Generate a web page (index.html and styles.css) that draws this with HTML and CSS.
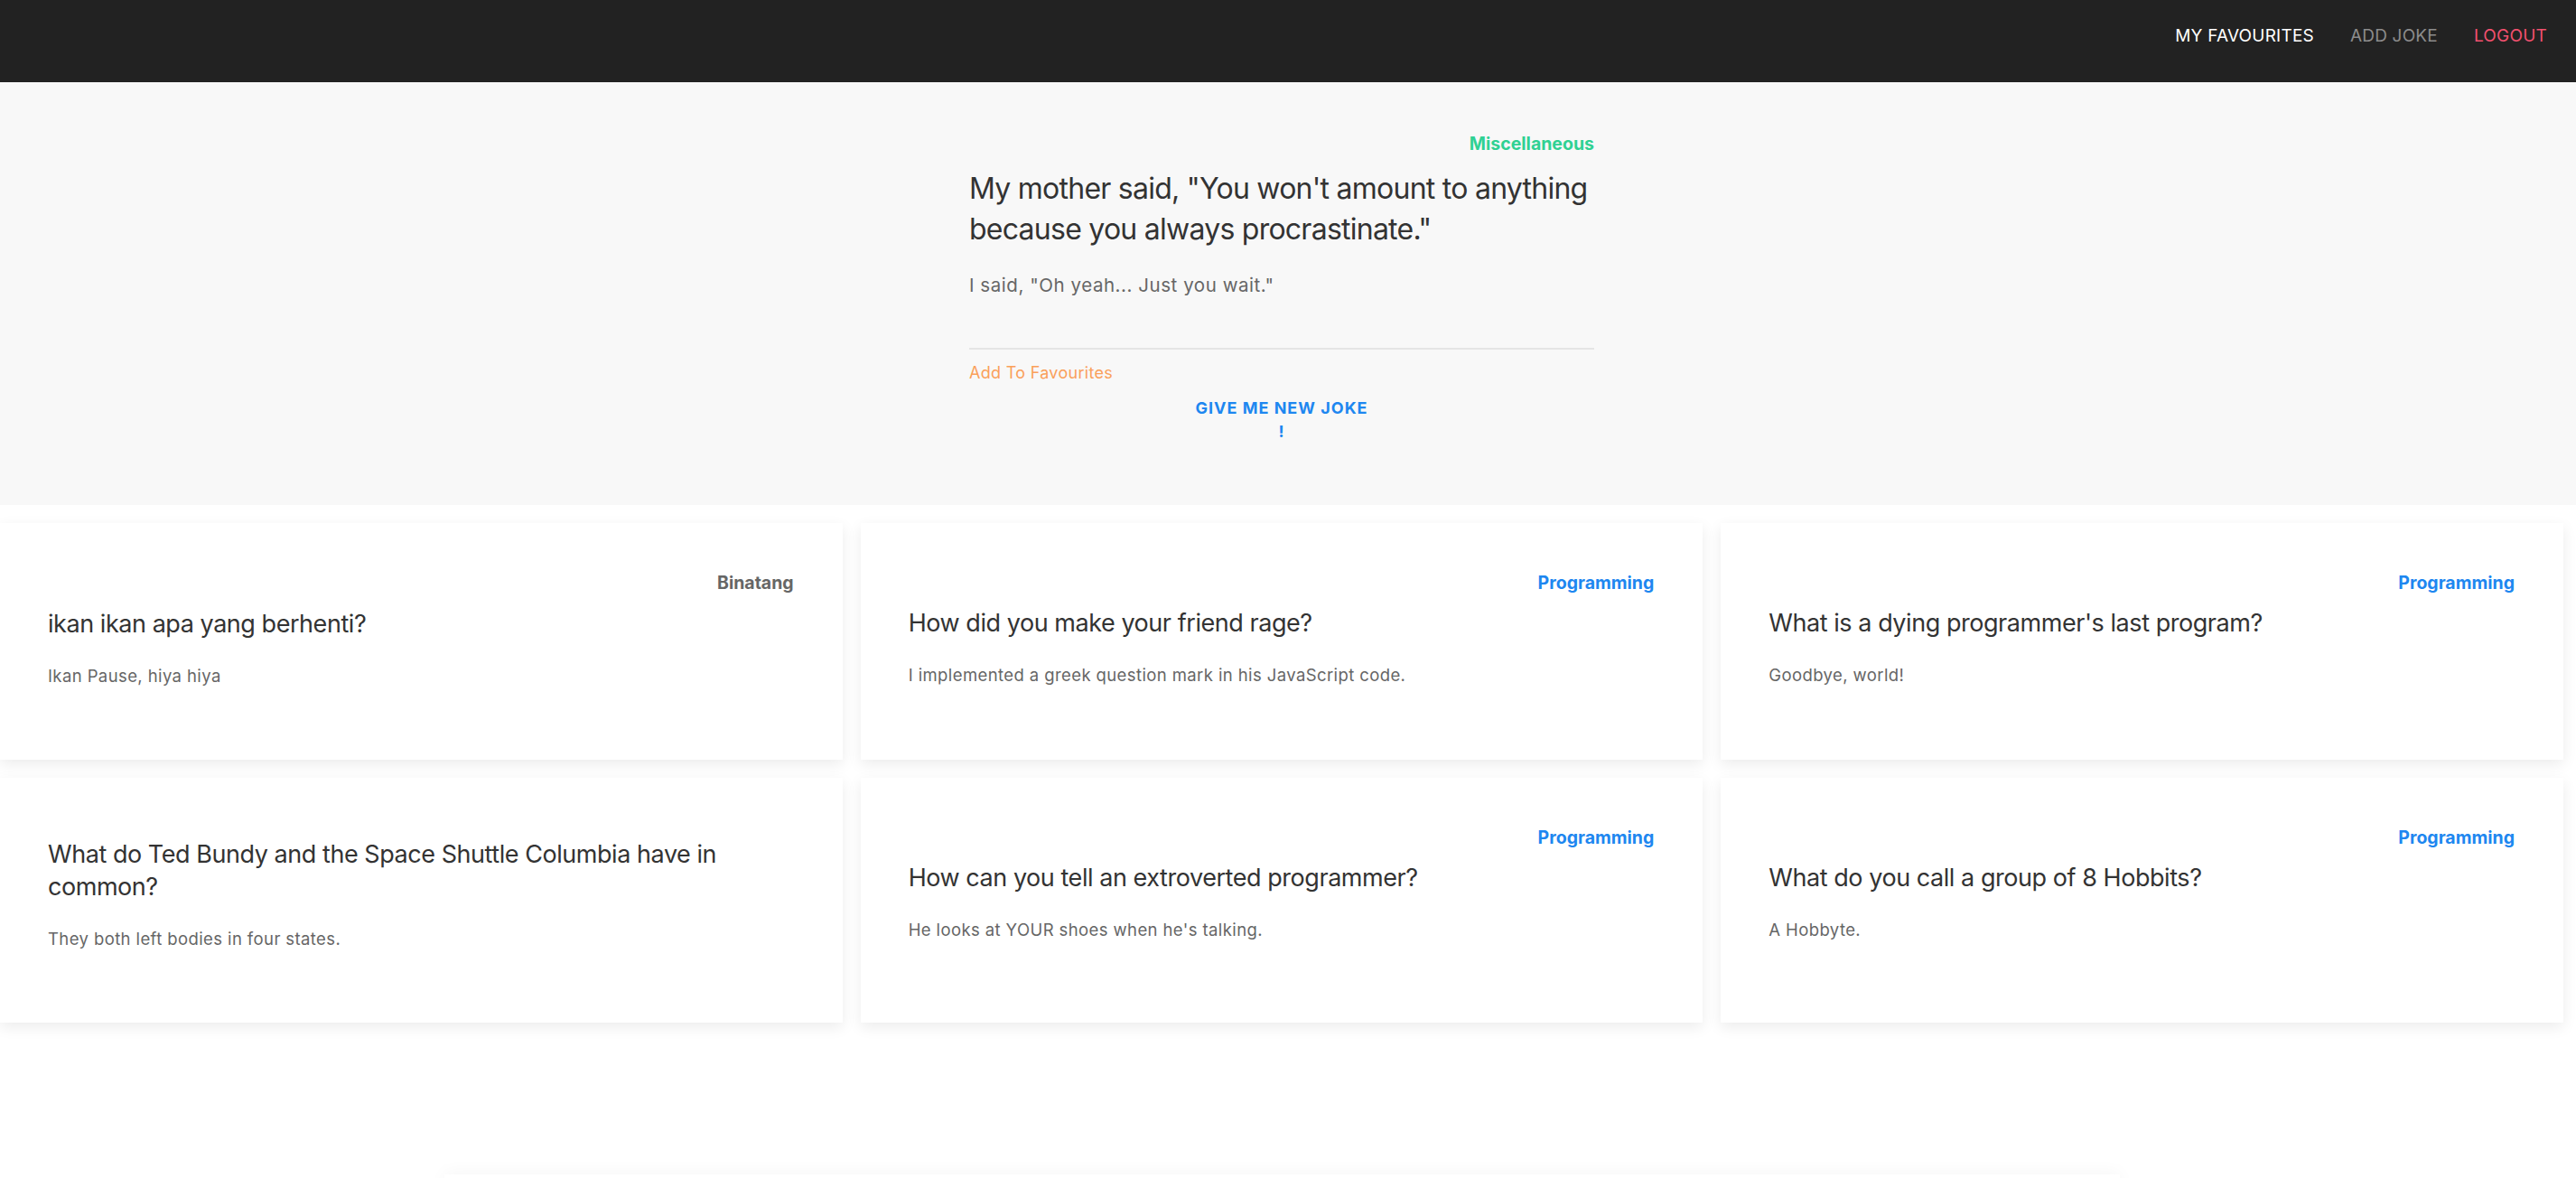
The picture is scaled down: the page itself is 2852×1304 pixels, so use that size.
FILE: index.html
```html
<!DOCTYPE html>
<html>
<head>
<meta charset="utf-8">
<link rel="stylesheet" href="styles.css">
</head>
<body>
<nav class="navbar">
  <a class="nav-link nav-active">MY FAVOURITES</a>
  <a class="nav-link nav-muted">ADD JOKE</a>
  <a class="nav-link nav-danger">LOGOUT</a>
</nav>
<section class="hero">
  <div class="hero-inner">
    <div class="tag tag-success">Miscellaneous</div>
    <h1 class="hero-title">My mother said, "You won't amount to anything because you always procrastinate."</h1>
    <p class="hero-sub">I said, "Oh yeah... Just you wait."</p>
    <div class="hero-footer">
      <a class="fav-link">Add To Favourites</a>
    </div>
    <div class="btn-row">
      <button class="btn-text">GIVE ME NEW JOKE !</button>
    </div>
  </div>
</section>
<main class="cards">
  <article class="card">
    <div class="tag tag-default">Binatang</div>
    <h3 class="card-title">ikan ikan apa yang berhenti?</h3>
    <p class="card-body">Ikan Pause, hiya hiya</p>
  </article>
  <article class="card">
    <div class="tag tag-primary">Programming</div>
    <h3 class="card-title">How did you make your friend rage?</h3>
    <p class="card-body">I implemented a greek question mark in his JavaScript code.</p>
  </article>
  <article class="card">
    <div class="tag tag-primary">Programming</div>
    <h3 class="card-title">What is a dying programmer's last program?</h3>
    <p class="card-body">Goodbye, world!</p>
  </article>
  <article class="card">
    <div class="tag tag-default"></div>
    <h3 class="card-title">What do Ted Bundy and the Space Shuttle Columbia have in common?</h3>
    <p class="card-body">They both left bodies in four states.</p>
  </article>
  <article class="card">
    <div class="tag tag-primary">Programming</div>
    <h3 class="card-title">How can you tell an extroverted programmer?</h3>
    <p class="card-body">He looks at YOUR shoes when he's talking.</p>
  </article>
  <article class="card">
    <div class="tag tag-primary">Programming</div>
    <h3 class="card-title">What do you call a group of 8 Hobbits?</h3>
    <p class="card-body">A Hobbyte.</p>
  </article>
</main>
<div class="footer-box"></div>
</body>
</html>
```
FILE: styles.css
```css
html, body {
  margin: 0;
  padding: 0;
  background: #fff;
  font-family: Inter, "Noto Sans", sans-serif;
  overflow: hidden;
}

.navbar {
  height: 91px;
  background: #222;
  display: flex;
  justify-content: flex-end;
  align-items: center;
  gap: 40px;
  padding: 0 32px 12px 0;
  box-sizing: border-box;
}

.nav-link {
  font-size: 19px;
  letter-spacing: 0.2px;
  line-height: 28px;
}
.nav-active { color: #fff; }
.nav-muted { color: #8c8c8c; }
.nav-danger { color: #f0506e; }

.hero {
  background: #f8f8f8;
  padding: 55px 14px 68px 0;
}

.hero-inner {
  width: 692px;
  margin: 0 auto;
}

.tag {
  font-size: 19.5px;
  font-weight: 700;
  line-height: 27px;
  text-align: right;
  margin-bottom: 13px;
}
.tag-success { color: #2fd193; margin-bottom: 13px; }
.tag-primary { color: #1e87f0; }
.tag-default { color: #666; margin-bottom: 14px; }

.hero-title {
  margin: 0;
  font-size: 32px;
  font-weight: 400;
  line-height: 45px;
  letter-spacing: -0.75px;
  color: #333;
}

.hero-sub {
  margin: 25px 0 0;
  font-size: 20.5px;
  line-height: 30px;
  letter-spacing: 0.55px;
  color: #666;
}

.hero-footer {
  margin-top: 54px;
  border-top: 2px solid #e5e5e5;
  padding-top: 12px;
}

.fav-link {
  display: block;
  font-size: 18px;
  line-height: 27px;
  letter-spacing: 0.3px;
  color: #faa05a;
}

.btn-row {
  display: flex;
  justify-content: center;
  margin-top: 13px;
}

.btn-text {
  width: 194px;
  padding: 0;
  border: 0;
  background: none;
  font-family: inherit;
  font-size: 18px;
  font-weight: 700;
  line-height: 26px;
  letter-spacing: 1px;
  color: #1e87f0;
  text-align: center;
}

.cards {
  display: grid;
  grid-template-columns: repeat(3, 1fr);
  gap: 20px;
  margin: 20px 14px 0 0;
}

.card {
  background: #fff;
  box-shadow: 0 5px 15px rgba(0, 0, 0, 0.08);
  padding: 53px 54px 79px 53px;
}

.card-title {
  margin: 0;
  font-size: 27px;
  font-weight: 400;
  line-height: 36px;
  letter-spacing: -0.45px;
  color: #333;
}

.card-body {
  margin: 26px 0 0;
  font-size: 18.5px;
  line-height: 27px;
  letter-spacing: 0.4px;
  color: #666;
}

.footer-box {
  width: 1855px;
  height: 60px;
  margin: 168px auto 0;
  position: relative;
  left: -7px;
  background: #fff;
  box-shadow: 0 -2px 18px rgba(0, 0, 0, 0.04);
}
```
